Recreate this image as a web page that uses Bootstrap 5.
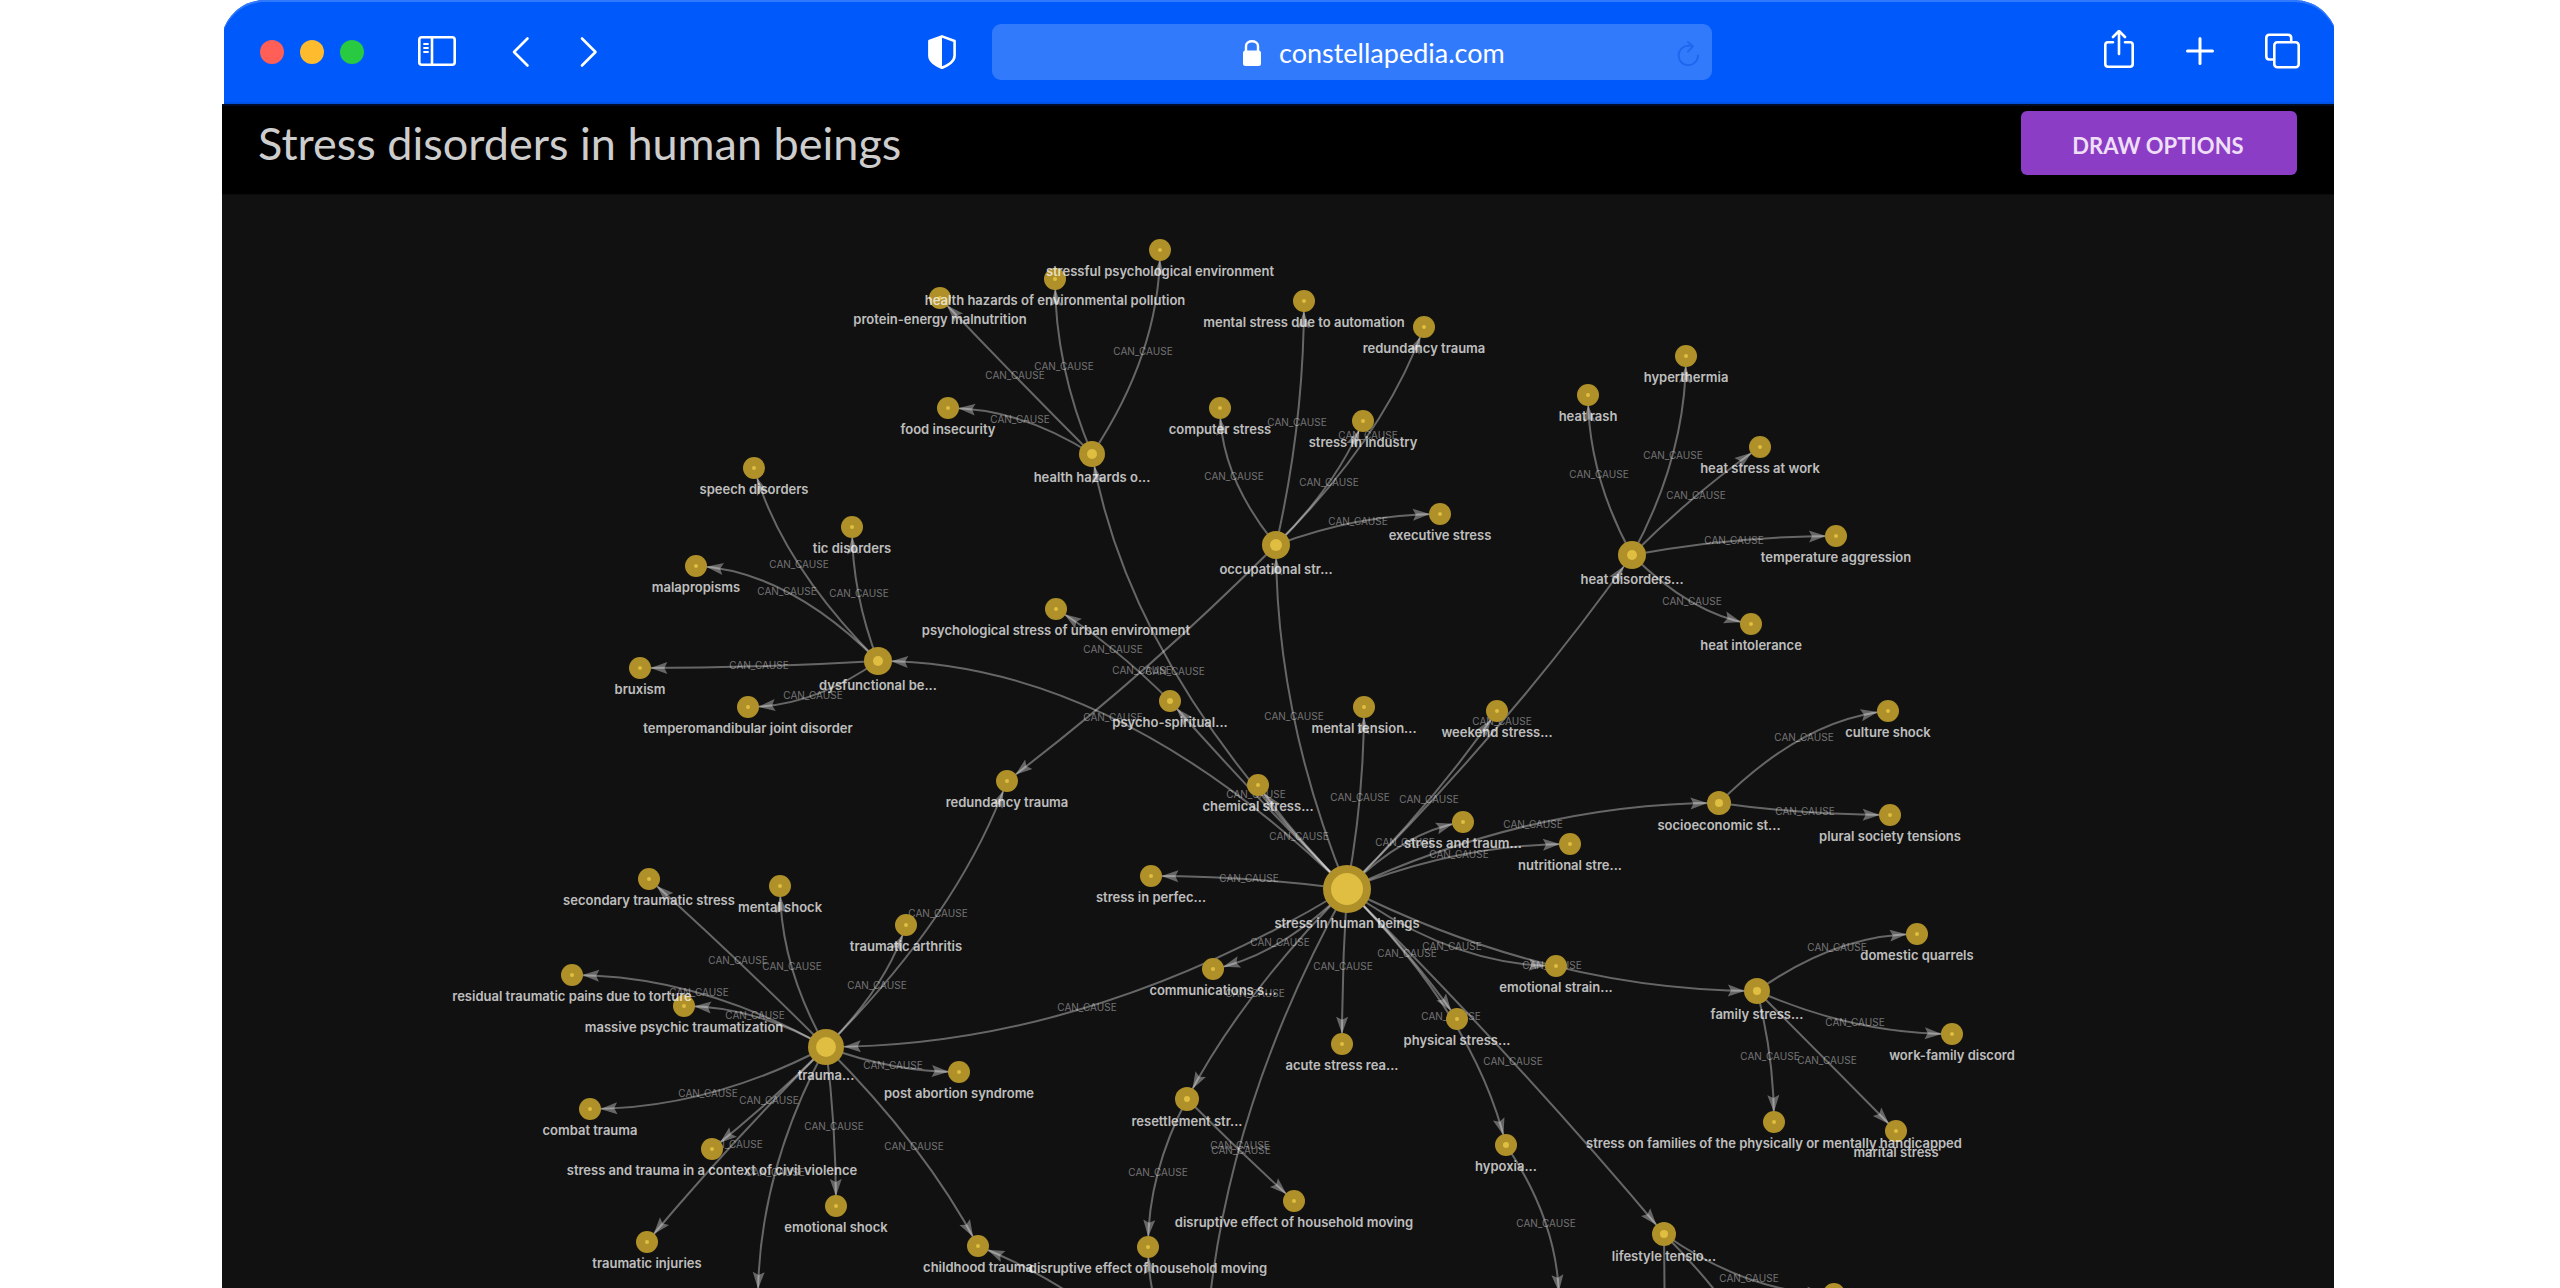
<!DOCTYPE html>
<html lang="en">
<head>
<meta charset="utf-8">
<meta name="viewport" content="width=device-width, initial-scale=1">
<title>Stress disorders in human beings</title>
<link href="https://cdn.jsdelivr.net/npm/bootstrap@5.3.0/dist/css/bootstrap.min.css" rel="stylesheet">
<style>
  body { font-family: Lato, sans-serif; background: #fff; }
  .page { padding: 0 226px 0 222px; }
  .chrome-clip { margin-left: 2px; }
  .chrome-bar {
    display: grid; grid-template-columns: 704fr 784fr 622fr;
    height: 104px; margin: 0 -4px 0 -3px; padding: 0 4px 0 3px;
    background: #0059fa; border-radius: 44px 44px 0 0;
    box-shadow: inset 0 2px #3079fc, inset 0 -2px #0052e2;
  }
  .window-dots { gap: 16px; padding-left: 36px; }
  .dot { width: 24px; height: 24px; border-radius: 50%; padding: 0; border: 0; }
  .dot-close { background: #ff5f57; }
  .dot-min { background: #febb2e; }
  .dot-max { background: #28ca42; }
  .ico-btn { border: 0; padding: 0; background: none; line-height: 0; color: #fff; }
  .ico-btn svg, .url-field svg { display: block; fill: none; stroke: currentColor; }
  .nav-icons { padding-left: 53px; gap: 53px; }
  .history-icons { gap: 46px; }
  .url-field { height: 56px; margin-left: 36px; padding: 0 12px 0 250px; border-radius: 9px; background: #327afc; color: #fff; }
  .url-text { width: 234px; margin-left: 17px; padding: 2px 0 0; border: 0; background: none; color: #fff; font-size: 27px; line-height: 36px; outline: 0; }
  .reload { color: #1d68ee; }
  .tool-icons { padding-right: 33px; gap: 50px; }
  .app-bar { height: 90px; border-top: 2px solid #020d28; background: #000; padding: 5px 37px 19px 36px; }
  .app-title { font-size: 45px; line-height: 56px; color: #cdcdcd; }
  .draw-btn { width: 276px; height: 64px; padding: 5px 2px 0 0; border-radius: 6px; background: #8c3dc6; border: 0; color: #eedff7; font-size: 22px; font-weight: 700; line-height: 28px; }
  .graph-area { background: #111; border-top: 1px solid #0b0b0b; }
  .graph-area svg { width: 100%; height: 100%; display: block; }
  .edge { fill: none; stroke: #fff; stroke-opacity: .36; stroke-width: 2; }
  .tip { fill: #fff; fill-opacity: .36; }
  .ring { fill: #b09029; }
  .core { fill: #dfbe42; }
  .node-text { font: 600 13px Inter, sans-serif; fill: #fff; fill-opacity: .74; text-anchor: middle; }
  .edge-text { font: 400 10px Inter, sans-serif; fill: #fff; fill-opacity: .42; text-anchor: middle; }
</style>
<script src="https://cdn.jsdelivr.net/npm/bootstrap@5.3.0/dist/js/bootstrap.bundle.min.js"></script>
</head>
<body>
<div class="page vh-100 d-flex flex-column overflow-hidden">
  <header class="chrome-clip overflow-hidden flex-shrink-0">
    <div class="chrome-bar">
      <div class="d-flex align-items-center">
        <div class="window-dots d-flex">
          <button class="dot dot-close" aria-label="Close"></button>
          <button class="dot dot-min" aria-label="Minimise"></button>
          <button class="dot dot-max" aria-label="Maximise"></button>
        </div>
        <div class="nav-icons d-flex">
          <button class="ico-btn" aria-label="Sidebar"><svg width="40" height="44" viewBox="417 30 40 44" stroke-width="2.6"><rect x="419.3" y="37.3" width="35.4" height="27.4" rx="2.5"/><path d="M432 37v28"/><path d="M424 44h4M424 48h4M424 52h4" stroke-width="1.8" stroke-linecap="round"/></svg></button>
          <div class="history-icons d-flex">
            <button class="ico-btn" aria-label="Back"><svg width="22" height="44" viewBox="510 30 22 44" stroke-width="2.6" stroke-linecap="round" stroke-linejoin="round"><path d="M527.5 38.5 514 52l13.5 13.5"/></svg></button>
            <button class="ico-btn" aria-label="Forward"><svg width="22" height="44" viewBox="578 30 22 44" stroke-width="2.6" stroke-linecap="round" stroke-linejoin="round"><path d="M582 38.5 595.5 52 582 65.5"/></svg></button>
          </div>
        </div>
      </div>
      <div class="d-flex align-items-center">
        <button class="ico-btn" aria-label="Privacy report"><svg width="28" height="44" viewBox="928 30 28 44" stroke-width="2.6"><path d="M942 36.4 954.6 41v14.5c0 6.5-7 9.5-12.6 12.3-5.6-2.800-12.6-5.800-12.6-12.3V41z" stroke-linejoin="round"/><path d="M942 36 929 41v15c0 6 7 9 13 12z" fill="#fff" stroke="none"/></svg></button>
        <div class="url-field d-flex align-items-center flex-grow-1">
          <svg width="20" height="44" viewBox="1242 30 20 44"><path d="M1246 51v-5c0-6.300 12-6.300 12 0v5" stroke-width="2.4"/><rect x="1243" y="50.5" width="18" height="15.5" rx="2.5" fill="#fff" stroke="none"/></svg>
          <input class="url-text" type="text" aria-label="Address" value="constellapedia.com">
          <button class="ico-btn reload ms-auto" aria-label="Reload"><svg width="24" height="44" viewBox="1676 30 24 44" stroke-width="2" stroke-linecap="round"><path d="M1698 55.5a9.700 9.700 0 1 1-9.500-9.700h3.500M1688 42l5 4.300-5 5.200" stroke-linejoin="round"/></svg></button>
        </div>
      </div>
      <div class="tool-icons d-flex align-items-center justify-content-end">
        <button class="ico-btn" aria-label="Share"><svg width="32" height="44" viewBox="2103 30 32 44" stroke-width="2.6" stroke-linecap="round" stroke-linejoin="round"><path d="M2113 42.300h-5q-2.700 0-2.700 2.700v19q0 2.700 2.700 2.700h22q2.700 0 2.700-2.700v-19q0-2.700-2.700-2.700h-5"/><path d="M2119 54V32M2113 37l6-6 6 6"/></svg></button>
        <button class="ico-btn" aria-label="New tab"><svg width="30" height="44" viewBox="2185 30 30 44" stroke-width="3" stroke-linecap="round"><path d="M2200 38.5v25M2187.5 51h25"/></svg></button>
        <button class="ico-btn" aria-label="Tab overview"><svg width="36" height="44" viewBox="2264 30 36 44" stroke-width="2.6"><rect x="2273.3" y="42.3" width="24.400" height="25" rx="3"/><path d="M2273 59.5h-4.500q-3.200 0-3.200-3.200V38q0-3.200 3.200-3.200h18.500q3.200 0 3.200 3.200v4"/></svg></button>
      </div>
    </div>
  </header>

  <div class="app-bar d-flex align-items-center justify-content-between flex-shrink-0">
    <h1 class="app-title fw-normal mb-0">Stress disorders in human beings</h1>
    <button class="btn draw-btn">DRAW OPTIONS</button>
  </div>

  <main class="graph-area flex-grow-1 overflow-hidden">
    <svg id="graph" viewBox="222 195 2112 1093" preserveAspectRatio="xMidYMin slice" role="img" aria-label="Cause graph"></svg>
  </main>
</div>

<script>
  // id: [x, y, radius, core radius, label]
  const nodes = {
    main: [1347, 889, 24, 16, 'stress in human beings'],
    trauma: [826, 1047, 18, 10, 'trauma...'],
    health: [1092, 454, 13, 5, 'health hazards o...'],
    occ: [1276, 545, 14, 6, 'occupational str...'],
    heat: [1632, 555, 14, 5, 'heat disorders...'],
    dys: [878, 661, 14, 5, 'dysfunctional be...'],
    socio: [1719, 803, 12, 4, 'socioeconomic st...'],
    family: [1757, 991, 13, 4, 'family stress...'],
    resettle: [1187, 1099, 12, 3, 'resettlement str...'],
    life: [1664, 1234, 12, 4, 'lifestyle tensio...'],
    psycho: [1170, 701, 11, 3, 'psycho-spiritual...'],
    hypoxia: [1506, 1145, 11, 3, 'hypoxia...'],
    stressful: [1160, 250, 11, 2, 'stressful psychological environment'],
    pollution: [1055, 279, 11, 2, 'health hazards of environmental pollution'],
    protein: [940, 298, 11, 2, 'protein-energy malnutrition'],
    food: [948, 408, 11, 2, 'food insecurity'],
    speech: [754, 468, 11, 2, 'speech disorders'],
    tic: [852, 527, 11, 2, 'tic disorders'],
    mala: [696, 566, 11, 2, 'malapropisms'],
    brux: [640, 668, 11, 2, 'bruxism'],
    tmj: [748, 707, 11, 2, 'temperomandibular joint disorder'],
    automation: [1304, 301, 11, 2, 'mental stress due to automation'],
    redund1: [1424, 327, 11, 2, 'redundancy trauma'],
    computer: [1220, 408, 11, 2, 'computer stress'],
    industry: [1363, 421, 11, 2, 'stress in industry'],
    executive: [1440, 514, 11, 2, 'executive stress'],
    hyper: [1686, 356, 11, 2, 'hyperthermia'],
    rash: [1588, 395, 11, 2, 'heat rash'],
    heatwork: [1760, 447, 11, 2, 'heat stress at work'],
    temp: [1836, 536, 11, 2, 'temperature aggression'],
    intol: [1751, 624, 11, 2, 'heat intolerance'],
    tension: [1364, 707, 11, 2, 'mental tension...'],
    weekend: [1497, 711, 11, 2, 'weekend stress...'],
    chemical: [1258, 785, 11, 2, 'chemical stress...'],
    sat: [1463, 822, 11, 2, 'stress and traum...'],
    nutri: [1570, 844, 11, 2, 'nutritional stre...'],
    culture: [1888, 711, 11, 2, 'culture shock'],
    plural: [1890, 815, 11, 2, 'plural society tensions'],
    perfec: [1151, 876, 11, 2, 'stress in perfec...'],
    domestic: [1917, 934, 11, 2, 'domestic quarrels'],
    strain: [1556, 966, 11, 2, 'emotional strain...'],
    comm: [1213, 969, 11, 2, 'communications s...'],
    urban: [1056, 609, 11, 2, 'psychological stress of urban environment'],
    redund2: [1007, 781, 11, 2, 'redundancy trauma'],
    secondary: [649, 879, 11, 2, 'secondary traumatic stress'],
    shock: [780, 886, 11, 2, 'mental shock'],
    arthritis: [906, 925, 11, 2, 'traumatic arthritis'],
    residual: [572, 975, 11, 2, 'residual traumatic pains due to torture'],
    massive: [684, 1006, 11, 2, 'massive psychic traumatization'],
    abortion: [959, 1072, 11, 2, 'post abortion syndrome'],
    combat: [590, 1109, 11, 2, 'combat trauma'],
    civil: [712, 1149, 11, 2, 'stress and trauma in a context of civil violence'],
    emoshock: [836, 1206, 11, 2, 'emotional shock'],
    injuries: [647, 1242, 11, 2, 'traumatic injuries'],
    childhood: [978, 1246, 11, 2, 'childhood trauma'],
    moving1: [1148, 1247, 11, 2, 'disruptive effect of household moving'],
    moving2: [1294, 1201, 11, 2, 'disruptive effect of household moving'],
    acute: [1342, 1044, 11, 2, 'acute stress rea...'],
    physical: [1457, 1019, 11, 2, 'physical stress...'],
    discord: [1952, 1034, 11, 2, 'work-family discord'],
    families: [1774, 1122, 11, 2, 'stress on families of the physically or mentally handicapped'],
    marital: [1896, 1131, 11, 2, 'marital stress'],
    low1: [1834, 1294, 11, 2, ''],
    low2: [1204, 1403, 14, 5, ''],
    low3: [1559, 1302, 11, 2, ''],
    low4: [758, 1299, 11, 2, ''],
    low5: [1665, 1420, 11, 2, ''],
    low6: [1790, 1420, 11, 2, '']
  };
  const causes = {
    main: ['health', 'dys', 'occ', 'psycho', 'chemical', 'tension', 'weekend', 'heat', 'sat', 'socio', 'nutri', 'perfec', 'comm', 'trauma', 'resettle', 'acute', 'physical', 'hypoxia', 'strain', 'family', 'life', 'low2'],
    health: ['stressful', 'pollution', 'protein', 'food'],
    occ: ['automation', 'redund1', 'computer', 'industry', 'executive', 'redund2'],
    heat: ['hyper', 'rash', 'heatwork', 'temp', 'intol'],
    dys: ['speech', 'tic', 'mala', 'brux', 'tmj'],
    psycho: ['urban'],
    socio: ['culture', 'plural'],
    family: ['domestic', 'discord', 'families', 'marital'],
    resettle: ['moving1', 'moving2'],
    trauma: ['secondary', 'shock', 'arthritis', 'redund2', 'residual', 'massive', 'abortion', 'combat', 'civil', 'injuries', 'emoshock', 'childhood', 'low4'],
    hypoxia: ['low3'],
    life: ['low1', 'low5', 'low6'],
    low2: ['childhood', 'moving1']
  };
  const viewBottom = 1288;
  let lines = '', dots = '', edgeTexts = '', nodeTexts = '';
  for (const from in causes) for (const to of causes[from]) {
    const [ax, ay] = nodes[from], [bx, by, r] = nodes[to];
    const dx = bx - ax, dy = by - ay, step = Math.max(Math.abs(dx), Math.abs(dy)) / 2;
    const vx = ax + Math.sign(dx) * Math.min(Math.abs(dx), step);
    const vy = ay + Math.sign(dy) * Math.min(Math.abs(dy), step);
    const at = t => [(1-t)*(1-t)*ax + 2*t*(1-t)*vx + t*t*bx, (1-t)*(1-t)*ay + 2*t*(1-t)*vy + t*t*by];
    const hit = d => { let t = 1; while (t > 0 && Math.hypot(at(t)[0] - bx, at(t)[1] - by) < d) t -= .002; return at(t); };
    const tip = hit(r), back = hit(r + 15);
    const angle = Math.atan2(tip[1] - back[1], tip[0] - back[0]) * 180 / Math.PI;
    lines += `<path class="edge" d="M${ax} ${ay}Q${vx} ${vy} ${bx} ${by}"/>` +
      `<path class="tip" d="M1 0L-16 6L-13 0L-16-6Z" transform="translate(${tip[0].toFixed(1)} ${tip[1].toFixed(1)}) rotate(${angle.toFixed(1)})"/>`;
    const m = at(.5);
    if (m[1] < viewBottom - 5) edgeTexts += `<text class="edge-text" x="${m[0].toFixed()}" y="${(m[1] + 3).toFixed()}">CAN_CAUSE</text>`;
  }
  for (const id in nodes) {
    const [x, y, r, core, label] = nodes[id];
    dots += `<circle class="ring" cx="${x}" cy="${y}" r="${r}"/><circle class="core" cx="${x}" cy="${y}" r="${core}"/>`;
    if (label) nodeTexts += `<text class="node-text" x="${x}" y="${y + r + 15}">${label}</text>`;
  }
  document.getElementById('graph').innerHTML = lines + edgeTexts + dots + nodeTexts;
</script>
</body>
</html>
